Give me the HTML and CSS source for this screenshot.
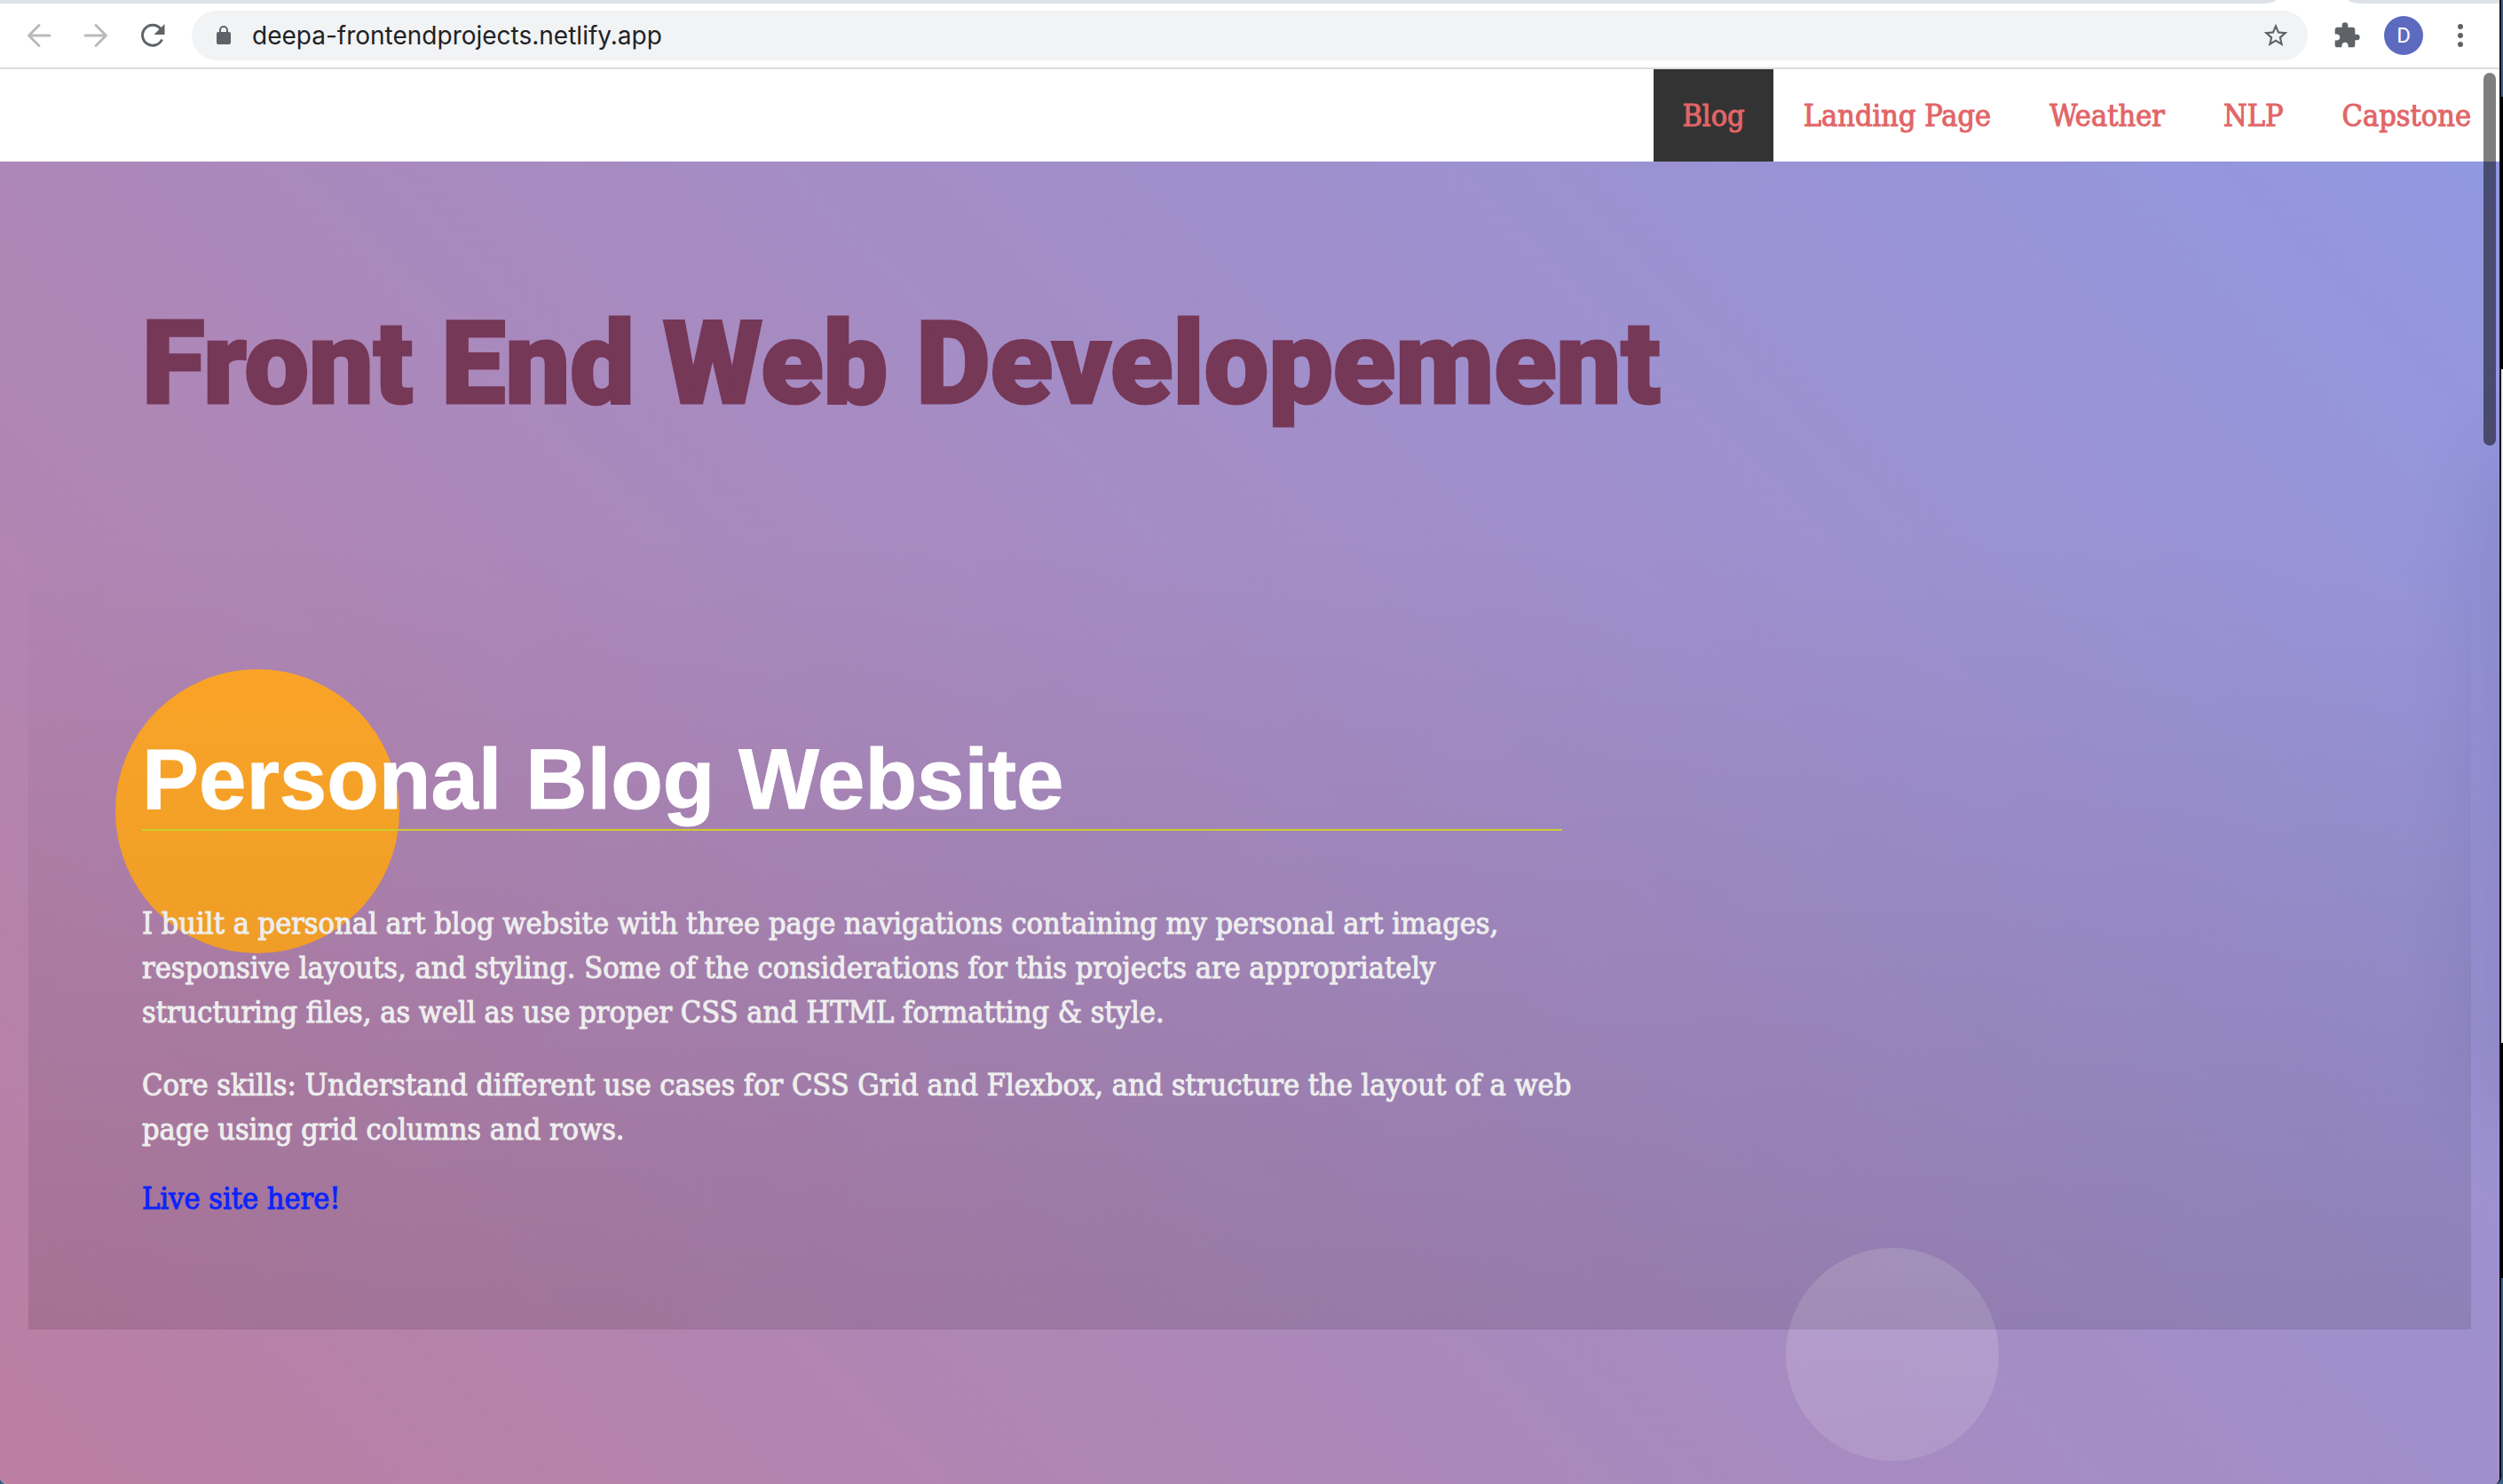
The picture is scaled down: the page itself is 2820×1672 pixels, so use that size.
FILE: index.html
```html
<!DOCTYPE html>
<html lang="en">
<head>
<meta charset="utf-8">
<title>Front End Web Developement</title>
<link rel="stylesheet" href="styles.css">
</head>
<body>
<div class="window">
  <div class="tab-strip"><span class="tabs"></span><span class="tabs-end"></span></div>
  <div class="toolbar">
    <div class="history">
      <button class="icon-button faded" type="button" aria-label="Back">
        <svg width="32" height="32" viewBox="0 0 32 32" fill="none" stroke="currentColor" stroke-width="3" stroke-linecap="round" stroke-linejoin="round"><path d="M28 16H5M16 4.500 4.500 16 16 27.500"/></svg>
      </button>
      <button class="icon-button faded" type="button" aria-label="Forward">
        <svg width="32" height="32" viewBox="0 0 32 32" fill="none" stroke="currentColor" stroke-width="3" stroke-linecap="round" stroke-linejoin="round"><path d="M4 16h23M16 4.500 27.500 16 16 27.500"/></svg>
      </button>
      <button class="icon-button" type="button" aria-label="Reload">
        <svg width="32" height="32" viewBox="0 0 32 32"><path d="M26.500 20.500A11.500 11.500 0 1 1 25 8.500" fill="none" stroke="currentColor" stroke-width="3"/><path d="M29.500 3v12H17.500z" fill="currentColor"/></svg>
      </button>
    </div>
    <div class="address">
      <svg class="lock" width="18" height="24" viewBox="0 0 18 24"><rect x="1" y="8" width="16" height="14" rx="2" fill="#5f6368"/><path d="M5 9V6a4 4 0 0 1 8 0v3" fill="none" stroke="#5f6368" stroke-width="2"/></svg>
      <input class="url" type="text" aria-label="Address" value="deepa-frontendprojects.netlify.app">
      <button class="icon-button" type="button" aria-label="Bookmark this page">
        <svg width="32" height="32" viewBox="0 0 24 24" fill="currentColor"><path d="M22 9.240l-7.190-.62L12 2 9.190 8.630 2 9.240l5.460 4.730L5.820 21 12 17.270 18.180 21l-1.630-7.030L22 9.240zM12 15.400l-3.760 2.270 1-4.280-3.320-2.880 4.380-.38L12 6.100l1.710 4.040 4.380.38-3.320 2.880 1 4.280L12 15.400z"/></svg>
      </button>
    </div>
    <div class="actions">
      <button class="icon-button" type="button" aria-label="Extensions">
        <svg width="32" height="32" viewBox="0 0 24 24" fill="currentColor"><path d="M20.500 11H19V7c0-1.100-.9-2-2-2h-4V3.500a2.500 2.500 0 0 0-5 0V5H4c-1.100 0-1.990.9-1.990 2v3.800H3.500c1.490 0 2.700 1.210 2.700 2.700s-1.210 2.700-2.700 2.700H2V20c0 1.100.9 2 2 2h3.800v-1.500c0-1.490 1.210-2.700 2.700-2.700s2.700 1.210 2.700 2.700V22H17c1.100 0 2-.9 2-2v-4h1.500a2.500 2.500 0 0 0 0-5z"/></svg>
      </button>
      <button class="avatar" type="button" aria-label="Profile">D</button>
      <button class="icon-button" type="button" aria-label="Menu">
        <svg width="32" height="32" viewBox="0 0 32 32" fill="currentColor"><circle cx="16" cy="6" r="3"/><circle cx="16" cy="16" r="3"/><circle cx="16" cy="26" r="3"/></svg>
      </button>
    </div>
  </div>

  <div class="page">
    <nav class="site-nav">
      <a class="current" href="#blog">Blog</a>
      <a href="#landing">Landing Page</a>
      <a href="#weather">Weather</a>
      <a href="#nlp">NLP</a>
      <a href="#capstone">Capstone</a>
    </nav>
    <main class="content">
      <header class="hero"><h1>Front End Web Developement</h1></header>
      <section class="project" id="blog">
        <div class="sun"></div>
        <div class="moon"></div>
        <div class="project-text">
          <h2>Personal Blog Website</h2>
          <p>I built a personal art blog website with three page navigations containing my personal art images,<br>responsive layouts, and styling. Some of the considerations for this projects are appropriately<br>structuring files, as well as use proper CSS and HTML formatting &amp; style.</p>
          <p>Core skills: Understand different use cases for CSS Grid and Flexbox, and structure the layout of a web<br>page using grid columns and rows.</p>
          <a class="live" href="#live">Live site here!</a>
        </div>
      </section>
      <div class="next-shadow"></div>
    </main>
    <div class="scroll-thumb"></div>
  </div>
</div>
</body>
</html>
```
FILE: styles.css
```css
* {
  box-sizing: border-box;
}

body {
  margin: 0;
  padding-right: 2px;
  background: linear-gradient(#3f5f86 0 109px, #000 109px 416px, #ececec 416px 1175px, #000 1175px 1440px, #3a5f86 1440px);
}

button {
  margin: 0;
  padding: 0;
  border: 0;
  background: none;
}

/* Browser window */
.window {
  display: flex;
  flex-direction: column;
  min-height: 100vh;
  overflow: hidden;
  border-right: 2px solid #0b0b0f;
  border-radius: 0 0 8px 8px;
  background: #fff;
}

.tab-strip {
  display: flex;
  gap: 82px;
  height: 4px;
}

.tabs {
  flex: 1;
  background: #dee1e6;
  border-bottom-right-radius: 16px 4px;
}

.tabs-end {
  width: 170px;
  background: #dee1e6;
  border-bottom-left-radius: 16px 4px;
}

.toolbar {
  display: flex;
  align-items: center;
  gap: 28px;
  height: 74px;
  padding: 0 28px;
  border-bottom: 2px solid #dadce3;
}

.history {
  display: flex;
  gap: 32px;
}

.icon-button {
  display: flex;
  color: #5f6368;
}

.faded {
  color: #bababc;
}

.address {
  display: flex;
  flex: 1;
  align-items: center;
  height: 56px;
  padding: 0 20px 0 27px;
  border-radius: 28px;
  background: #f1f3f4;
}

.url {
  flex: 1;
  height: 40px;
  margin: 0;
  padding: 0 0 0 23px;
  border: 0;
  background: none;
  color: #202124;
  font: 28px Inter, sans-serif;
}

.actions {
  display: flex;
  align-items: center;
  gap: 26px;
}

.avatar {
  width: 44px;
  height: 44px;
  border-radius: 50%;
  background: #5c6bc0;
  color: #fff;
  font: 24px/44px Roboto, sans-serif;
}

/* Site */
.page {
  position: relative;
  display: flex;
  flex: 1;
  flex-direction: column;
  font: 34px/50px "DejaVu Serif Condensed", "DejaVu Serif", serif;
  -webkit-text-stroke: 1px;
}

.site-nav {
  display: flex;
  gap: 2px;
  justify-content: flex-end;
}

.site-nav a {
  padding: 27px 32px;
  color: #e26567;
  text-decoration: none;
}

.site-nav .current {
  background: #333;
}

.content {
  position: relative;
  isolation: isolate;
  flex: 1;
  overflow: hidden;
  background: linear-gradient(45deg, #bc7ea2, #9198e1);
}

.hero {
  padding: 148px 160px 102px;
}

h1 {
  margin: 0;
  color: #763857;
  font: 900 129px/160px Roboto, sans-serif;
  -webkit-text-stroke: 3px;
}

.project {
  position: relative;
  margin: 0 32px;
  padding: 230px 128px 123px;
  background: linear-gradient(rgba(0, 0, 0, 0), rgba(0, 0, 0, 0.11));
}

.project-text {
  width: 1600px;
  max-width: 100%;
  color: #eee;
}

h2 {
  margin: 0 0 79px;
  border-bottom: 2px solid #cdcd2d;
  color: #fff;
  font: bold 96px/112px "Liberation Sans", Arial, sans-serif;
}

p {
  margin: 0 0 32px;
  white-space: nowrap;
}

.live {
  display: block;
  width: fit-content;
  margin-top: -4px;
  color: #0b24fb;
  text-decoration: none;
}

.sun,
.moon {
  position: absolute;
  z-index: -1;
  border-radius: 50%;
}

.sun {
  top: 162px;
  left: 98px;
  width: 320px;
  height: 320px;
  background: #fea729;
}

.moon {
  top: 814px;
  right: 532px;
  width: 240px;
  height: 240px;
  background: linear-gradient(rgba(255, 255, 255, 0.18), rgba(255, 255, 255, 0.11));
}

/* Soft shade cast from beyond the right edge */
.next-shadow {
  position: absolute;
  top: 340px;
  right: -80px;
  width: 70px;
  height: 720px;
  box-shadow: 0 0 110px rgba(20, 20, 60, 0.2);
}

.scroll-thumb {
  position: absolute;
  top: 4px;
  right: 4px;
  width: 14px;
  height: 420px;
  border-radius: 7px;
  background: rgba(0, 0, 0, 0.5);
}
```
